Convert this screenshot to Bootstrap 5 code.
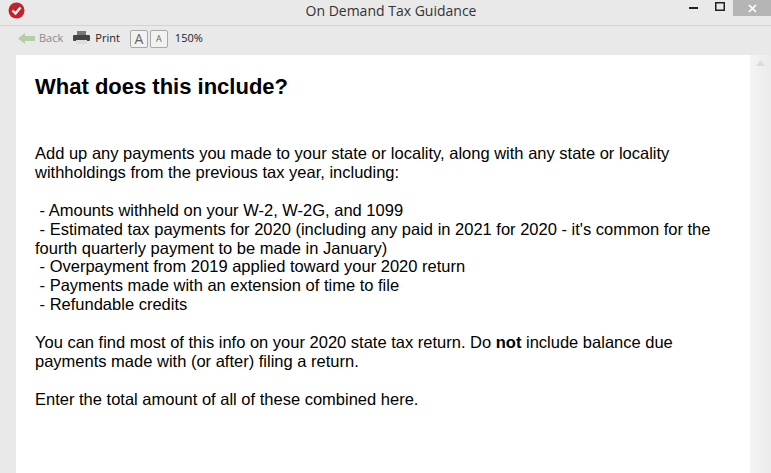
<!DOCTYPE html>
<html lang="en">
<head>
  <meta charset="UTF-8">
  <title>On Demand Tax Guidance</title>
  <link href="https://cdn.jsdelivr.net/npm/bootstrap@5.3.0/dist/css/bootstrap.min.css" rel="stylesheet">
  <style>
    html, body {
      height: 100%;
      overflow: hidden;
    }
    body {
      background-color: #e9e9e9;
      font-family: "Open Sans", "Liberation Sans", sans-serif;
    }
    .title-strip {
      height: 26px;
      border-bottom: 1px solid #d4d4d4;
    }
    .title-icon {
      left: 8px;
      top: 2px;
    }
    .title-text {
      left: 0;
      right: 0;
      top: 2px;
      font-size: 14px;
      line-height: 18px;
      color: #333;
      text-align: center;
      padding-left: 11px;
    }
    .win-min {
      width: 12px;
      height: 16px;
      margin-left: 689px;
    }
    .win-max {
      margin-left: 14px;
      margin-top: 2px;
    }
    .win-close {
      width: 38px;
      height: 16px;
      background-color: #b5b5b5;
      margin-left: 8px;
    }
    .tool-strip {
      height: 25px;
      padding-left: 18px;
      font-size: 11px;
      color: #222;
    }
    .tool-back {
      color: #8a8a8a;
      margin-left: 4px;
    }
    .tool-print {
      margin-left: 10px;
      margin-top: -3px;
    }
    .tool-label {
      margin-left: 5px;
    }
    .size-btn {
      width: 18px;
      height: 18px;
      border: 1px solid #a9a9a9;
      border-radius: 2px;
      background-color: #f2f2f2;
      color: #666;
      line-height: 16px;
      text-align: center;
    }
    .size-big {
      font-size: 14px;
      margin-left: 10px;
    }
    .size-small {
      font-size: 9px;
      margin-left: 2px;
    }
    .tool-zoom {
      margin-left: 7px;
    }
    .content-row {
      padding-left: 16px;
      height: 422px;
      margin-top: 4px;
    }
    .doc-pane {
      width: 734px;
      background-color: #fff;
      padding: 18px 19px;
      font-family: "Liberation Sans", Arial, sans-serif;
      font-size: 16.5px;
      line-height: 18.9px;
      color: #000;
    }
    .doc-pane h1 {
      font-family: "Liberation Sans", Arial, sans-serif;
      font-size: 22px;
      line-height: 27px;
      font-weight: 700;
      margin-bottom: 44px;
    }
    .doc-pane p {
      margin-bottom: 18.9px;
    }
    .scroll-track {
      width: 21px;
      background: linear-gradient(to right, #f4f4f4, #ebebeb);
      padding-top: 5px;
    }
  </style>
</head>
<body>

<div class="title-strip position-relative d-flex align-items-start">
  <svg class="title-icon position-absolute" width="17" height="17" viewBox="0 0 17 17">
    <circle cx="8.5" cy="8.5" r="8" fill="#c8202b"/>
    <path d="M4.5 8.5l3 3 5-6" fill="none" stroke="#fff" stroke-width="2.4"/>
  </svg>
  <div class="title-text position-absolute">On Demand Tax Guidance</div>
  <div class="win-min d-flex align-items-center">
    <svg width="9" height="2"><rect width="9" height="2" fill="#222"/></svg>
  </div>
  <svg class="win-max" width="10" height="9" viewBox="0 0 10 9">
    <rect x="0.75" y="0.75" width="8.5" height="7.5" fill="none" stroke="#222" stroke-width="1.5"/>
  </svg>
  <div class="win-close d-flex align-items-center justify-content-center">
    <svg width="9" height="9" viewBox="0 0 9 9">
      <path d="M1 1l7 7M8 1l-7 7" stroke="#fff" stroke-width="1.7"/>
    </svg>
  </div>
</div>

<div class="tool-strip d-flex align-items-center">
  <svg width="17" height="11" viewBox="0 0 17 11">
    <path d="M0 5.5L7 0v3h10v5H7v3z" fill="#b3cfa8"/>
  </svg>
  <span class="tool-back">Back</span>
  <svg class="tool-print" width="17" height="13" viewBox="0 0 17 13">
    <rect x="4" y="0" width="9" height="5" fill="#777"/>
    <rect x="0" y="4" width="17" height="6" rx="1" fill="#444"/>
    <rect x="3" y="9" width="11" height="4" fill="#ddd"/>
  </svg>
  <span class="tool-label">Print</span>
  <span class="size-btn size-big">A</span>
  <span class="size-btn size-small">A</span>
  <span class="tool-zoom">150%</span>
</div>

<div class="content-row d-flex">
  <div class="doc-pane">
    <h1>What does this include?</h1>
    <p>Add up any payments you made to your state or locality, along with any state or locality withholdings from the previous tax year, including:</p>
    <p>
      &nbsp;- Amounts withheld on your W-2, W-2G, and 1099<br>
      &nbsp;- Estimated tax payments for 2020 (including any paid in 2021 for 2020 - it's common for the fourth quarterly payment to be made in January)<br>
      &nbsp;- Overpayment from 2019 applied toward your 2020 return<br>
      &nbsp;- Payments made with an extension of time to file<br>
      &nbsp;- Refundable credits
    </p>
    <p>You can find most of this info on your 2020 state tax return. Do <strong>not</strong> include balance due payments made with (or after) filing a return.</p>
    <p>Enter the total amount of all of these combined here.</p>
  </div>
  <div class="scroll-track">
    <svg class="d-block mx-auto" width="9" height="6" viewBox="0 0 9 6">
      <path d="M0 6l4.5-6L9 6z" fill="#dcdcdc"/>
    </svg>
  </div>
</div>

<script src="https://cdn.jsdelivr.net/npm/bootstrap@5.3.0/dist/js/bootstrap.bundle.min.js"></script>
</body>
</html>
